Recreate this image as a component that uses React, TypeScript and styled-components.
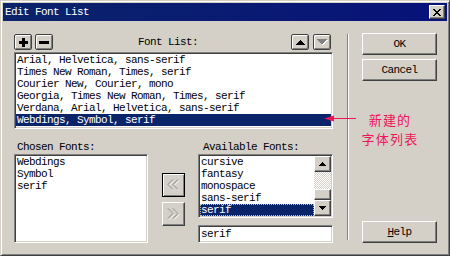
import React from "react";
import styled, { createGlobalStyle, css } from "styled-components";

const FACE = "#D4D0C8";
const SHADOW = "#808080";
const DARK = "#404040";
const HILITE = "#0A246A";
const NOTE = "#F01458";
const MONO = `"Liberation Mono", "DejaVu Sans Mono", monospace`;

const GlobalStyle = createGlobalStyle`
  html, body { margin: 0; padding: 0; background: ${FACE}; }
  body {
    width: 450px; height: 256px; overflow: hidden;
    font-family: ${MONO}; font-size: 11px; letter-spacing: -0.6px; color: #000;
  }
  * { box-sizing: border-box; }
`;

const raised = css`
  background: ${FACE};
  border: 1px solid;
  border-color: #fff ${DARK} ${DARK} #fff;
  box-shadow: inset -1px -1px ${SHADOW};
`;

const sunken = css`
  background: #fff;
  border: 1px solid;
  border-color: ${SHADOW} #fff #fff ${SHADOW};
  box-shadow: inset 1px 1px ${DARK}, inset -1px -1px ${FACE};
  padding: 1px;
`;

const Window = styled.div`
  position: relative;
  width: 450px;
  height: 256px;
  display: flex;
  flex-direction: column;
  padding: 2px;
  background: ${FACE};
  border: 1px solid;
  border-color: ${FACE} ${DARK} ${DARK} ${FACE};
  box-shadow: inset 1px 1px #fff, inset -1px -1px ${SHADOW};
`;

const TitleBar = styled.div`
  height: 18px;
  flex: none;
  display: flex;
  align-items: center;
  padding: 0 2px;
  background: linear-gradient(to right, #0a246a, #08127a);
  color: #fff;
`;

const TitleText = styled.span`
  font-size: 11px;
  line-height: 18px;
`;

const CloseButton = styled.button`
  ${raised};
  margin-left: auto;
  width: 16px;
  height: 14px;
  padding: 0;
  display: flex;
  align-items: center;
  justify-content: center;
`;

const Body = styled.div`
  flex: 1;
  display: flex;
  padding: 12px 10px 10px 11px;
`;

const LeftPanel = styled.div`
  width: 319px;
  flex: none;
  display: flex;
  flex-direction: column;
`;

const Toolbar = styled.div`
  height: 18px;
  margin-top: 1px;
  display: flex;
  align-items: flex-start;
`;

const ToolGroup = styled.div<{ $gap: number; $right?: number }>`
  display: flex;
  gap: ${(p) => p.$gap}px;
  margin-right: ${(p) => p.$right ?? 0}px;
`;

const ToolButton = styled.button`
  width: 18px;
  height: 16px;
  padding: 0;
  background: ${FACE};
  border: 1px solid ${DARK};
  border-radius: 2px;
  box-shadow: inset 1px 1px #fff, inset -1px -1px ${SHADOW};
  display: flex;
  align-items: center;
  justify-content: center;
`;

const ToolbarLabel = styled.div`
  flex: 1;
  text-align: center;
  padding-right: 8px;
  line-height: 16px;
`;

const FontListBox = styled.div`
  ${sunken};
  height: 77px;
  overflow: hidden;
`;

const Row = styled.div<{ $selected?: boolean }>`
  height: 12px;
  line-height: 12px;
  padding-left: 1px;
  white-space: nowrap;
  background: ${(p) => (p.$selected ? HILITE : "transparent")};
  color: ${(p) => (p.$selected ? "#fff" : "#000")};
`;

const FocusRow = styled(Row)`
  outline: 1px dotted #c8c0a0;
  outline-offset: -1px;
`;

const BottomGrid = styled.div`
  margin-top: 12px;
  display: grid;
  grid-template-columns: 134px 50px 135px;
  grid-template-rows: 13px auto;
`;

const FieldLabel = styled.div<{ $indent: number }>`
  padding-left: ${(p) => p.$indent}px;
  line-height: 12px;
  white-space: nowrap;
`;

const ChosenList = styled.div`
  ${sunken};
  height: 89px;
`;

const MoveColumn = styled.div`
  display: flex;
  flex-direction: column;
  align-items: center;
  padding-top: 19px;
  gap: 5px;
`;

const MoveButton = styled.button<{ $framed?: boolean }>`
  width: 23px;
  height: 24px;
  padding: 0;
  display: flex;
  align-items: center;
  justify-content: center;
  ${(p) =>
    p.$framed
      ? css`
          background: ${FACE};
          border: 1px solid #000;
          box-shadow: inset 1px 1px #fff, inset -1px -1px ${SHADOW};
        `
      : raised};
`;

const AvailableColumn = styled.div`
  display: flex;
  flex-direction: column;
  gap: 7px;
`;

const AvailList = styled.div`
  ${sunken};
  height: 64px;
  display: flex;
`;

const AvailItems = styled.div`
  flex: 1;
  min-width: 0;
`;

const ScrollBar = styled.div`
  width: 17px;
  flex: none;
  display: flex;
  flex-direction: column;
`;

const ScrollButton = styled.div`
  ${raised};
  height: 16px;
  flex: none;
  display: flex;
  align-items: center;
  justify-content: center;
`;

const ScrollTrack = styled.div`
  flex: 1;
  background-color: #fff;
  background-image: conic-gradient(${FACE} 25%, #fff 0 50%, ${FACE} 0 75%, #fff 0);
  background-size: 2px 2px;
`;

const ScrollThumb = styled.div`
  ${raised};
  height: 11px;
  flex: none;
`;

const EditBox = styled.div`
  ${sunken};
  height: 18px;
  padding: 0 2px;
  display: flex;
  align-items: center;
`;

const Separator = styled.div`
  width: 2px;
  flex: none;
  margin: 1px 0 3px 14px;
  border-left: 1px solid ${SHADOW};
  border-right: 1px solid #fff;
`;

const RightColumn = styled.div`
  width: 75px;
  flex: none;
  margin-left: 13px;
  display: flex;
  flex-direction: column;
  gap: 4px;
`;

const DialogButton = styled.button<{ $bottom?: boolean }>`
  ${raised};
  height: 22px;
  width: 100%;
  padding: 0;
  font: inherit;
  letter-spacing: inherit;
  color: #000;
  margin-top: ${(p) => (p.$bottom ? "auto" : "0")};
`;

const Underline = styled.span`
  text-decoration: underline;
  text-underline-offset: 1px;
`;

const Pointer = styled.svg`
  position: absolute;
  left: 323px;
  top: 114px;
`;

const Note = styled.div`
  position: absolute;
  left: 357px;
  top: 111px;
  width: 64px;
  display: flex;
  flex-direction: column;
  align-items: center;
  gap: 3px;
  font-family: "Noto Sans CJK SC", "Noto Sans", sans-serif;
  font-size: 13px;
  letter-spacing: 1.2px;
  color: ${NOTE};
`;

const NoteLine = styled.div`
  height: 16px;
  line-height: 16px;
  white-space: nowrap;
`;

const CloseGlyph = () => (
  <svg width="8" height="7" viewBox="0 0 8 7" shapeRendering="crispEdges">
    <path
      d="M0 0h2v1h-2zM6 0h2v1h-2zM1 1h2v1h-2zM5 1h2v1h-2zM2 2h4v1h-4zM3 3h2v1h-2zM2 4h4v1h-4zM1 5h2v1h-2zM5 5h2v1h-2zM0 6h2v1h-2zM6 6h2v1h-2z"
      fill="#000"
    />
  </svg>
);

const PlusGlyph = () => (
  <svg width="9" height="9" viewBox="0 0 9 9" shapeRendering="crispEdges">
    <path d="M0 3h9v3h-9zM3 0h3v9h-3z" fill="#000" />
  </svg>
);

const MinusGlyph = () => (
  <svg width="10" height="3" viewBox="0 0 10 3" shapeRendering="crispEdges">
    <path d="M0 0h10v3h-10z" fill="#000" />
  </svg>
);

const UpGlyph = ({ w = 9, h = 5 }: { w?: number; h?: number }) => (
  <svg width={w} height={h} viewBox={`0 0 ${w} ${h}`} shapeRendering="crispEdges">
    <path d={`M${w / 2} 0L${w} ${h}H0z`} fill="#000" />
  </svg>
);

const DownGlyph = ({ w = 7, h = 4 }: { w?: number; h?: number }) => (
  <svg width={w} height={h} viewBox={`0 0 ${w} ${h}`} shapeRendering="crispEdges">
    <path d={`M0 0H${w}L${w / 2} ${h}z`} fill="#000" />
  </svg>
);

const DisabledDown = () => (
  <svg width="11" height="7" viewBox="0 0 11 7" shapeRendering="crispEdges">
    <path d="M1 1H11L6 7z" fill="#fff" />
    <path d="M0 0H10L5 6z" fill={SHADOW} />
  </svg>
);

const Chevrons = ({ dir }: { dir: "left" | "right" }) => {
  const pts =
    dir === "left"
      ? ["6,0.5 1,5.5 6,10.5", "11,0.5 6,5.5 11,10.5"]
      : ["1,0.5 6,5.5 1,10.5", "6,0.5 11,5.5 6,10.5"];
  return (
    <svg width="13" height="12" viewBox="0 0 13 12" fill="none">
      <g transform="translate(1,1)" stroke="#fff" strokeWidth="1">
        {pts.map((p) => (
          <polyline key={p} points={p} />
        ))}
      </g>
      <g stroke={SHADOW} strokeWidth="1">
        {pts.map((p) => (
          <polyline key={p} points={p} />
        ))}
      </g>
    </svg>
  );
};

const fontLists = [
  "Arial, Helvetica, sans-serif",
  "Times New Roman, Times, serif",
  "Courier New, Courier, mono",
  "Georgia, Times New Roman, Times, serif",
  "Verdana, Arial, Helvetica, sans-serif",
  "Webdings, Symbol, serif",
];

const chosen = ["Webdings", "Symbol", "serif"];
const available = ["cursive", "fantasy", "monospace", "sans-serif", "serif"];

export default function App() {
  return (
    <>
      <GlobalStyle />
      <Window>
        <TitleBar>
          <TitleText>Edit Font List</TitleText>
          <CloseButton aria-label="Close">
            <CloseGlyph />
          </CloseButton>
        </TitleBar>
        <Body>
          <LeftPanel>
            <Toolbar>
              <ToolGroup $gap={3}>
                <ToolButton aria-label="Add">
                  <PlusGlyph />
                </ToolButton>
                <ToolButton aria-label="Remove">
                  <MinusGlyph />
                </ToolButton>
              </ToolGroup>
              <ToolbarLabel>Font List:</ToolbarLabel>
              <ToolGroup $gap={4} $right={2}>
                <ToolButton aria-label="Move up">
                  <UpGlyph w={9} h={5} />
                </ToolButton>
                <ToolButton aria-label="Move down">
                  <DisabledDown />
                </ToolButton>
              </ToolGroup>
            </Toolbar>
            <FontListBox>
              {fontLists.map((f, i) => (
                <Row key={f} $selected={i === fontLists.length - 1}>
                  {f}
                </Row>
              ))}
            </FontListBox>
            <BottomGrid>
              <FieldLabel $indent={3}>Chosen Fonts:</FieldLabel>
              <div />
              <FieldLabel $indent={5}>Available Fonts:</FieldLabel>
              <ChosenList>
                {chosen.map((c) => (
                  <Row key={c}>{c}</Row>
                ))}
              </ChosenList>
              <MoveColumn>
                <MoveButton $framed aria-label="Add font">
                  <Chevrons dir="left" />
                </MoveButton>
                <MoveButton aria-label="Remove font">
                  <Chevrons dir="right" />
                </MoveButton>
              </MoveColumn>
              <AvailableColumn>
                <AvailList>
                  <AvailItems>
                    {available.map((a, i) =>
                      i === available.length - 1 ? (
                        <FocusRow key={a} $selected>
                          {a}
                        </FocusRow>
                      ) : (
                        <Row key={a}>{a}</Row>
                      )
                    )}
                  </AvailItems>
                  <ScrollBar>
                    <ScrollButton>
                      <UpGlyph w={7} h={4} />
                    </ScrollButton>
                    <ScrollTrack />
                    <ScrollThumb />
                    <ScrollButton>
                      <DownGlyph w={7} h={4} />
                    </ScrollButton>
                  </ScrollBar>
                </AvailList>
                <EditBox>serif</EditBox>
              </AvailableColumn>
            </BottomGrid>
          </LeftPanel>
          <Separator />
          <RightColumn>
            <DialogButton>OK</DialogButton>
            <DialogButton>Cancel</DialogButton>
            <DialogButton $bottom>
              <Underline>H</Underline>elp
            </DialogButton>
          </RightColumn>
        </Body>
        <Pointer width="32" height="7" viewBox="0 0 32 7">
          <path d="M0 3.5L10 0.5V6.5z" fill={NOTE} />
          <rect x="9" y="3" width="23" height="1" fill={NOTE} />
        </Pointer>
        <Note>
          <NoteLine>新建的</NoteLine>
          <NoteLine>字体列表</NoteLine>
        </Note>
      </Window>
    </>
  );
}
